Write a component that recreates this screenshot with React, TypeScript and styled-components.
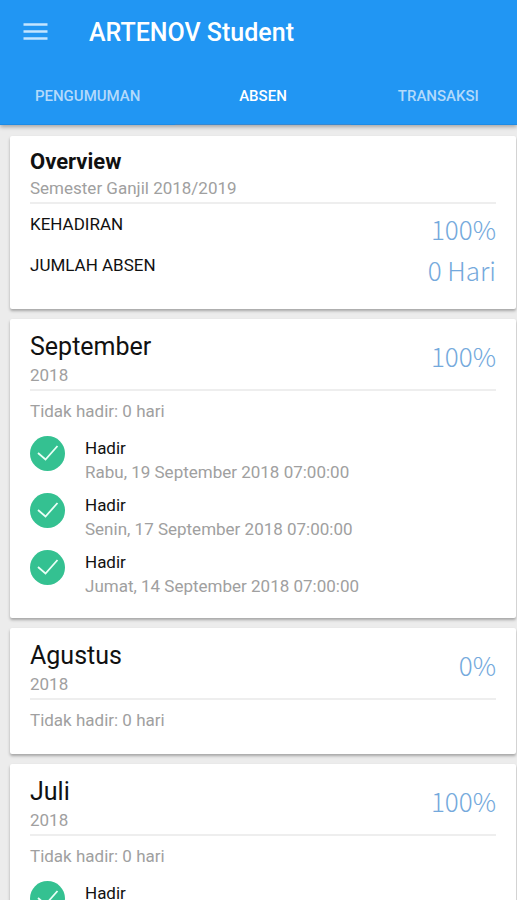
import React from "react";
import styled, { createGlobalStyle } from "styled-components";

const GlobalStyle = createGlobalStyle`
  * { box-sizing: border-box; }
  body {
    margin: 0;
    background: #ececec;
    color: #111;
    font-family: Roboto, "Liberation Sans", sans-serif;
    overflow-x: hidden;
  }
  h1, h2, p, ul, dl, dt, dd { margin: 0; padding: 0; }
`;

const Header = styled.header`
  position: relative;
  overflow-x: clip;
  background: #2196f3;
  color: #fff;
  box-shadow: 0 2px 4px rgba(0, 0, 0, 0.3);
`;

const Toolbar = styled.div`
  display: flex;
  align-items: center;
  gap: 40px;
  height: 64px;
  padding: 0 23px;
`;

const MenuButton = styled.button`
  display: flex;
  padding: 0;
  border: 0;
  background: none;
  color: #c4e5ff;
  cursor: pointer;
`;

const AppTitle = styled.h1`
  padding-top: 2px;
  font-size: 25px;
  font-weight: 500;
  line-height: 32px;
`;

const Tabs = styled.nav`
  display: flex;
  margin-right: -9px;
`;

const Tab = styled.button<{ $active: boolean }>`
  flex: 1 1 0;
  height: 61px;
  padding: 4px 0 0;
  border: 0;
  border-bottom: 1px solid ${(p) => (p.$active ? "#3787cf" : "#1c8be6")};
  background: none;
  color: ${(p) => (p.$active ? "#fff" : "#b3dafb")};
  font-family: inherit;
  font-size: 15px;
  font-weight: 500;
  cursor: pointer;
`;

const CardList = styled.main`
  display: flex;
  flex-direction: column;
  gap: 10px;
  padding: 11px 1px 11px 10px;
`;

const Card = styled.section`
  padding: 12px 20px 20px;
  border-radius: 2px;
  background: #fff;
  box-shadow: 0 2px 3px rgba(0, 0, 0, 0.3);
`;

const CardHead = styled.div`
  display: flex;
  justify-content: space-between;
  align-items: center;
  padding-bottom: 2px;
  border-bottom: 2px solid #eeeeee;
`;

const OverviewTitle = styled.h2`
  font-size: 22px;
  font-weight: 700;
  line-height: 28px;
`;

const MonthTitle = styled.h2`
  font-size: 25px;
  font-weight: 400;
  line-height: 32px;
`;

const Subtitle = styled.p`
  color: #a0a0a0;
  font-size: 17px;
  line-height: 24px;
`;

const Figure = styled.span`
  color: #74a9dc;
  font-family: "Noto Sans CJK SC", "Noto Sans", sans-serif;
  font-size: 26px;
  font-weight: 300;
  line-height: 28px;
`;

const MonthRate = styled(Figure)`
  padding-bottom: 6px;
`;

const Summary = styled.dl`
  padding-bottom: 3px;
`;

const SummaryRow = styled.div`
  display: flex;
  justify-content: space-between;
  align-items: flex-start;
  height: 41px;
  padding-top: 10px;
`;

const SummaryLabel = styled.dt`
  font-size: 17px;
  line-height: 20px;
`;

const SummaryValue = styled.dd`
  padding-top: 1px;
  line-height: 28px;
`;

const Note = styled.p`
  padding: 8px 0 2px;
  color: #a0a0a0;
  font-size: 17px;
  line-height: 24px;
`;

const Entries = styled.ul`
  display: flex;
  flex-direction: column;
  gap: 9px;
  margin-top: 11px;
  list-style: none;
`;

const Entry = styled.li`
  display: flex;
  gap: 20px;
`;

const Badge = styled.svg`
  flex: none;
  width: 35px;
  height: 35px;
`;

const EntryStatus = styled.p`
  font-size: 17px;
  line-height: 24px;
`;

const EntryDate = styled(EntryStatus)`
  color: #a0a0a0;
`;

interface Month {
  name: string;
  year: string;
  rate: string;
  note: string;
  dates: string[];
}

const tabs = ["PENGUMUMAN", "ABSEN", "TRANSAKSI"];

const months: Month[] = [
  {
    name: "September",
    year: "2018",
    rate: "100%",
    note: "Tidak hadir: 0 hari",
    dates: [
      "Rabu, 19 September 2018 07:00:00",
      "Senin, 17 September 2018 07:00:00",
      "Jumat, 14 September 2018 07:00:00",
    ],
  },
  { name: "Agustus", year: "2018", rate: "0%", note: "Tidak hadir: 0 hari", dates: [] },
  { name: "Juli", year: "2018", rate: "100%", note: "Tidak hadir: 0 hari", dates: [""] },
];

const CheckBadge = () => (
  <Badge viewBox="0 0 35 35" aria-hidden="true">
    <circle cx="17.5" cy="17.5" r="17.5" fill="#34c191" />
    <path d="M8 17L15.5 23.5L27.5 10" fill="none" stroke="#e9fff6" strokeWidth="1.8" />
  </Badge>
);

const MonthCard = ({ month }: { month: Month }) => (
  <Card>
    <CardHead>
      <div>
        <MonthTitle>{month.name}</MonthTitle>
        <Subtitle>{month.year}</Subtitle>
      </div>
      <MonthRate>{month.rate}</MonthRate>
    </CardHead>
    <Note>{month.note}</Note>
    {month.dates.length > 0 && (
      <Entries>
        {month.dates.map((date) => (
          <Entry key={date}>
            <CheckBadge />
            <div>
              <EntryStatus>Hadir</EntryStatus>
              {date && <EntryDate>{date}</EntryDate>}
            </div>
          </Entry>
        ))}
      </Entries>
    )}
  </Card>
);

export default function App() {
  const [active, setActive] = React.useState("ABSEN");
  return (
    <>
      <GlobalStyle />
      <Header>
        <Toolbar>
          <MenuButton aria-label="Menu">
            <svg width="26" height="20" viewBox="0 0 26 20" aria-hidden="true">
              <path d="M0.5 2.5H24.5M0.5 9.5H24.5M0.5 16.5H24.5" stroke="currentColor" strokeWidth="2.4" />
            </svg>
          </MenuButton>
          <AppTitle>ARTENOV Student</AppTitle>
        </Toolbar>
        <Tabs>
          {tabs.map((label) => (
            <Tab key={label} $active={label === active} onClick={() => setActive(label)}>
              {label}
            </Tab>
          ))}
        </Tabs>
      </Header>
      <CardList>
        <Card>
          <CardHead>
            <div>
              <OverviewTitle>Overview</OverviewTitle>
              <Subtitle>Semester Ganjil 2018/2019</Subtitle>
            </div>
          </CardHead>
          <Summary>
            <SummaryRow>
              <SummaryLabel>KEHADIRAN</SummaryLabel>
              <SummaryValue>
                <Figure>100%</Figure>
              </SummaryValue>
            </SummaryRow>
            <SummaryRow>
              <SummaryLabel>JUMLAH ABSEN</SummaryLabel>
              <SummaryValue>
                <Figure>0 Hari</Figure>
              </SummaryValue>
            </SummaryRow>
          </Summary>
        </Card>
        {months.map((month) => (
          <MonthCard key={month.name} month={month} />
        ))}
      </CardList>
    </>
  );
}
